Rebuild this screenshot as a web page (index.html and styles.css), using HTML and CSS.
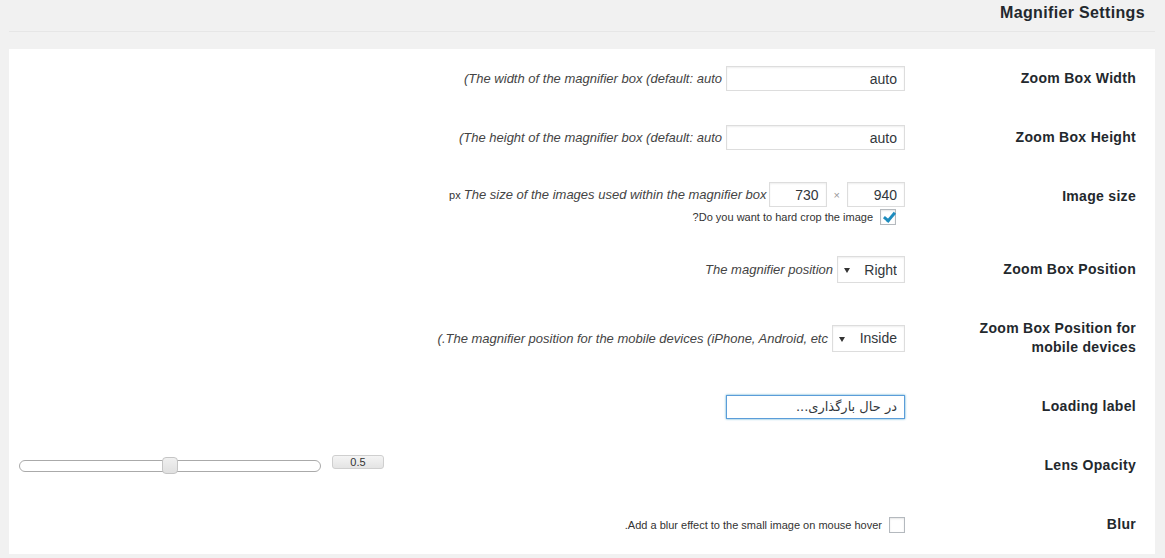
FILE: index.html
```html
<!DOCTYPE html>
<html lang="fa" dir="rtl">
<head>
    <meta charset="UTF-8">
    <meta name="viewport" content="width=device-width, initial-scale=1.0">
    <title>Magnifier Settings</title>
    <link rel="stylesheet" href="styles.css">
</head>
<body>
    <div class="wrap">
        <h2 class="page-title">Magnifier Settings</h2>

        <div class="settings">
            <div class="row">
                <div class="label">Zoom Box Width</div>
                <div class="field">
                    <input type="text" class="text-input" value="auto">
                    <span class="description" dir="ltr">(The width of the magnifier box (default: auto</span>
                </div>
            </div>

            <div class="row">
                <div class="label">Zoom Box Height</div>
                <div class="field">
                    <input type="text" class="text-input" value="auto">
                    <span class="description" dir="ltr">(The height of the magnifier box (default: auto</span>
                </div>
            </div>

            <div class="row">
                <div class="label">Image size</div>
                <div class="field stacked">
                    <div class="size-line">
                        <input type="text" class="num-input" value="940">
                        <span class="times">×</span>
                        <input type="text" class="num-input" value="730">
                        <span class="size-note">px <em class="description">The size of the images used within the magnifier box</em></span>
                    </div>
                    <label class="crop-line">
                        <input type="checkbox" class="check crop-check" checked>
                        <span class="small-text">Do you want to hard crop the image?</span>
                    </label>
                </div>
            </div>

            <div class="row">
                <div class="label">Zoom Box Position</div>
                <div class="field">
                    <span class="select-wrap">
                        <select class="select">
                            <option>Right</option>
                            <option>Left</option>
                        </select>
                    </span>
                    <span class="description">The magnifier position</span>
                </div>
            </div>

            <div class="row">
                <div class="label">Zoom Box Position for mobile devices</div>
                <div class="field">
                    <span class="select-wrap">
                        <select class="select">
                            <option>Inside</option>
                            <option>Right</option>
                            <option>Left</option>
                        </select>
                    </span>
                    <span class="description" dir="ltr">(.The magnifier position for the mobile devices (iPhone, Android, etc</span>
                </div>
            </div>

            <div class="row">
                <div class="label">Loading label</div>
                <div class="field">
                    <input type="text" class="text-input focused" value="در حال بارگذاری...">
                </div>
            </div>

            <div class="row">
                <div class="label">Lens Opacity</div>
                <div class="field to-left">
                    <div class="range" dir="ltr">
                        <div class="slider">
                            <span class="slider-handle" style="left: 50%;"></span>
                        </div>
                        <span class="slider-value">0.5</span>
                    </div>
                </div>
            </div>

            <div class="row">
                <div class="label">Blur</div>
                <div class="field">
                    <label class="blur-line">
                        <input type="checkbox" class="check">
                        <span class="small-text">Add a blur effect to the small image on mouse hover.</span>
                    </label>
                </div>
            </div>
        </div>
    </div>
</body>
</html>
```

FILE: styles.css
```css
body {
    margin: 0;
    background-color: #f1f1f1;
    color: #444;
    font-family: "Liberation Sans", Arial, sans-serif;
    font-size: 13px;
}

.wrap {
    margin: 0 10px 0 9px;
}

/* header */
.page-title {
    margin: 0;
    padding: 3px 10px 0;
    height: 28px;
    font-size: 16px;
    letter-spacing: 0.35px;
    line-height: 20px;
    font-weight: bold;
    color: #23282d;
    border-bottom: 1px solid #e6e6e6;
}

.settings {
    margin-top: 17px;
    background-color: #fff;
}

.row {
    display: grid;
    grid-template-columns: 240px 1fr;
}

.label {
    align-self: start;
    padding: 20px 19px 20px 21px;
    font-size: 14px;
    line-height: 19px;
    letter-spacing: 0.3px;
    font-weight: bold;
    color: #23282d;
}

.field {
    align-self: center;
    padding: 15px 10px;
    display: flex;
    align-items: center;
    gap: 4px;
}

.field.stacked {
    flex-direction: column;
    align-items: flex-start;
    gap: 1px;
}

.field.to-left {
    justify-content: flex-end;
}

.description {
    font-style: italic;
    font-size: 13px;
    color: #444;
}

.small-text {
    font-size: 11px;
    color: #333;
}

/* inputs */
.text-input, .num-input {
    box-sizing: border-box;
    height: 25px;
    margin: 0;
    padding: 2px 7px;
    border: 1px solid #ddd;
    box-shadow: inset 0 1px 2px rgba(0, 0, 0, 0.07);
    background-color: #fff;
    color: #32373c;
    font-family: "Liberation Sans", Arial, sans-serif;
    font-size: 14px;
    outline: none;
}

.text-input {
    width: 179px;
}

.text-input.focused {
    height: 24px;
    border-color: #5b9dd9;
    box-shadow: 0 0 2px rgba(30, 140, 190, 0.8);
    font-family: "DejaVu Sans", sans-serif;
    font-size: 13px;
}

.num-input {
    width: 58px;
}

.size-line {
    display: flex;
    align-items: center;
}

.times {
    margin: 0 7px;
    font-size: 11px;
    color: #999;
}

.size-note {
    margin-right: 2px;
    font-size: 11px;
    color: #333;
}

.size-note .description {
    font-size: 13px;
}

.crop-line, .blur-line {
    display: flex;
    align-items: center;
    gap: 7px;
    align-self: stretch;
}

.crop-line {
    height: 17px;
}

.crop-check {
    margin-right: 9px !important;
}

/* checkbox */
.check {
    -webkit-appearance: none;
    appearance: none;
    position: relative;
    box-sizing: border-box;
    width: 16px;
    height: 16px;
    margin: 0;
    border: 1px solid #b4b9be;
    background-color: #fff;
    box-shadow: inset 0 1px 2px rgba(0, 0, 0, 0.1);
    flex-shrink: 0;
}

.check:checked::before {
    content: "";
    position: absolute;
    left: 5px;
    top: 0px;
    width: 4px;
    height: 9px;
    border-right: 3px solid #1e8cbe;
    border-bottom: 3px solid #1e8cbe;
    transform: rotate(40deg);
}

/* select */
.select-wrap {
    position: relative;
    display: inline-block;
}

.select-wrap::after {
    content: "";
    position: absolute;
    left: 7px;
    top: 12px;
    border-left: 3px solid transparent;
    border-right: 3px solid transparent;
    border-top: 5px solid #333;
    pointer-events: none;
}

.select {
    -webkit-appearance: none;
    appearance: none;
    box-sizing: border-box;
    height: 27px;
    margin: 0;
    padding: 0 7px 0 26px;
    border: 1px solid #ddd;
    box-shadow: inset 0 1px 2px rgba(0, 0, 0, 0.07);
    background-color: #fff;
    color: #32373c;
    font-family: "Liberation Sans", Arial, sans-serif;
    font-size: 14px;
    outline: none;
}

/* opacity slider */
.range {
    display: flex;
    align-items: center;
    height: 18px;
}

.slider {
    position: relative;
    box-sizing: border-box;
    width: 302px;
    height: 12px;
    border: 1px solid #aaa;
    border-radius: 6px;
    background-color: #fff;
}

.slider-handle {
    position: absolute;
    top: -4px;
    margin-left: -8px;
    box-sizing: border-box;
    width: 16px;
    height: 17px;
    border: 1px solid #c5c5c5;
    border-radius: 4px;
    background: linear-gradient(#f0f0f0, #e0e0e0);
}

.slider-value {
    box-sizing: border-box;
    width: 52px;
    height: 14px;
    margin: 0 0 8px 11px;
    border: 1px solid #cfcfcf;
    border-radius: 3px;
    background: linear-gradient(#f4f4f4, #e4e4e4);
    font-size: 11px;
    line-height: 12px;
    text-align: center;
    color: #333;
}
```
